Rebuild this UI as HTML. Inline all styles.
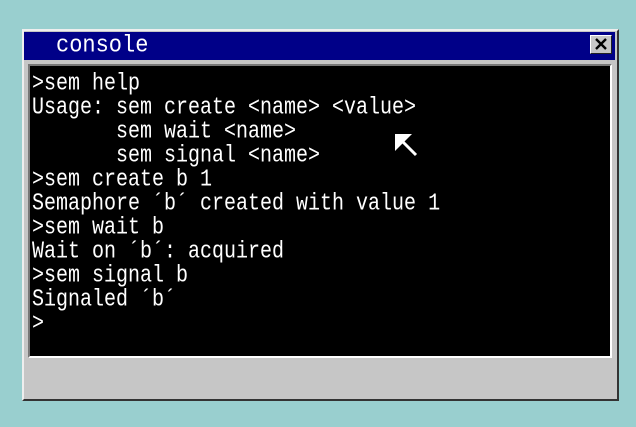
<!DOCTYPE html>
<html><head><style>
body{margin:0;width:636px;height:427px;background:#99cfcf;position:relative;overflow:hidden}
.win{position:absolute;left:22px;top:29px;width:597px;height:372px;background:#c6c6c6;border-top:2px solid #eee;border-left:2px solid #eee;border-right:2px solid #333;border-bottom:2px solid #333;box-sizing:border-box}
.title{position:absolute;left:24px;top:32px;width:591px;height:28px;background:#000088;color:#fff;font:22px "Liberation Mono",monospace;line-height:28px}
.title span{position:absolute;left:32px;top:0;transform:scaleY(1.1)}
.close{position:absolute;left:590px;top:35px;width:22px;height:19px;background:#c6c6c6;border-top:1px solid #fff;border-left:1px solid #fff;border-right:1px solid #222;border-bottom:1px solid #222;box-sizing:border-box}
.term{position:absolute;left:28px;top:64px;width:584px;height:294px;background:#000;border-top:2px solid #777;border-left:2px solid #777;border-right:2px solid #fff;border-bottom:2px solid #fff;box-sizing:border-box}
pre{position:absolute;left:32px;top:72px;margin:0;color:#fff;font:20px "Liberation Mono",monospace;line-height:24px}
pre div{height:24px;transform:scaleY(1.2);transform-origin:0 40%}
</style></head><body>
<div class="win"></div>
<div class="title"><span>console</span></div>
<div class="close"><svg width="20" height="17" style="position:absolute;left:0;top:0"><path d="M5 3L15 13M15 3L5 13" stroke="#000" stroke-width="2.4"/></svg></div>
<div class="term"></div>
<pre><div>&gt;sem help</div><div>Usage: sem create &lt;name&gt; &lt;value&gt;</div><div>       sem wait &lt;name&gt;</div><div>       sem signal &lt;name&gt;</div><div>&gt;sem create b 1</div><div>Semaphore ´b´ created with value 1</div><div>&gt;sem wait b</div><div>Wait on ´b´: acquired</div><div>&gt;sem signal b</div><div>Signaled ´b´</div><div>&gt;</div></pre>
<svg width="636" height="427" style="position:absolute;left:0;top:0"><path d="M395 134L412 134L395 151Z" fill="#fff"/><path d="M400 139L416 155" stroke="#fff" stroke-width="3"/></svg>
</body></html>
